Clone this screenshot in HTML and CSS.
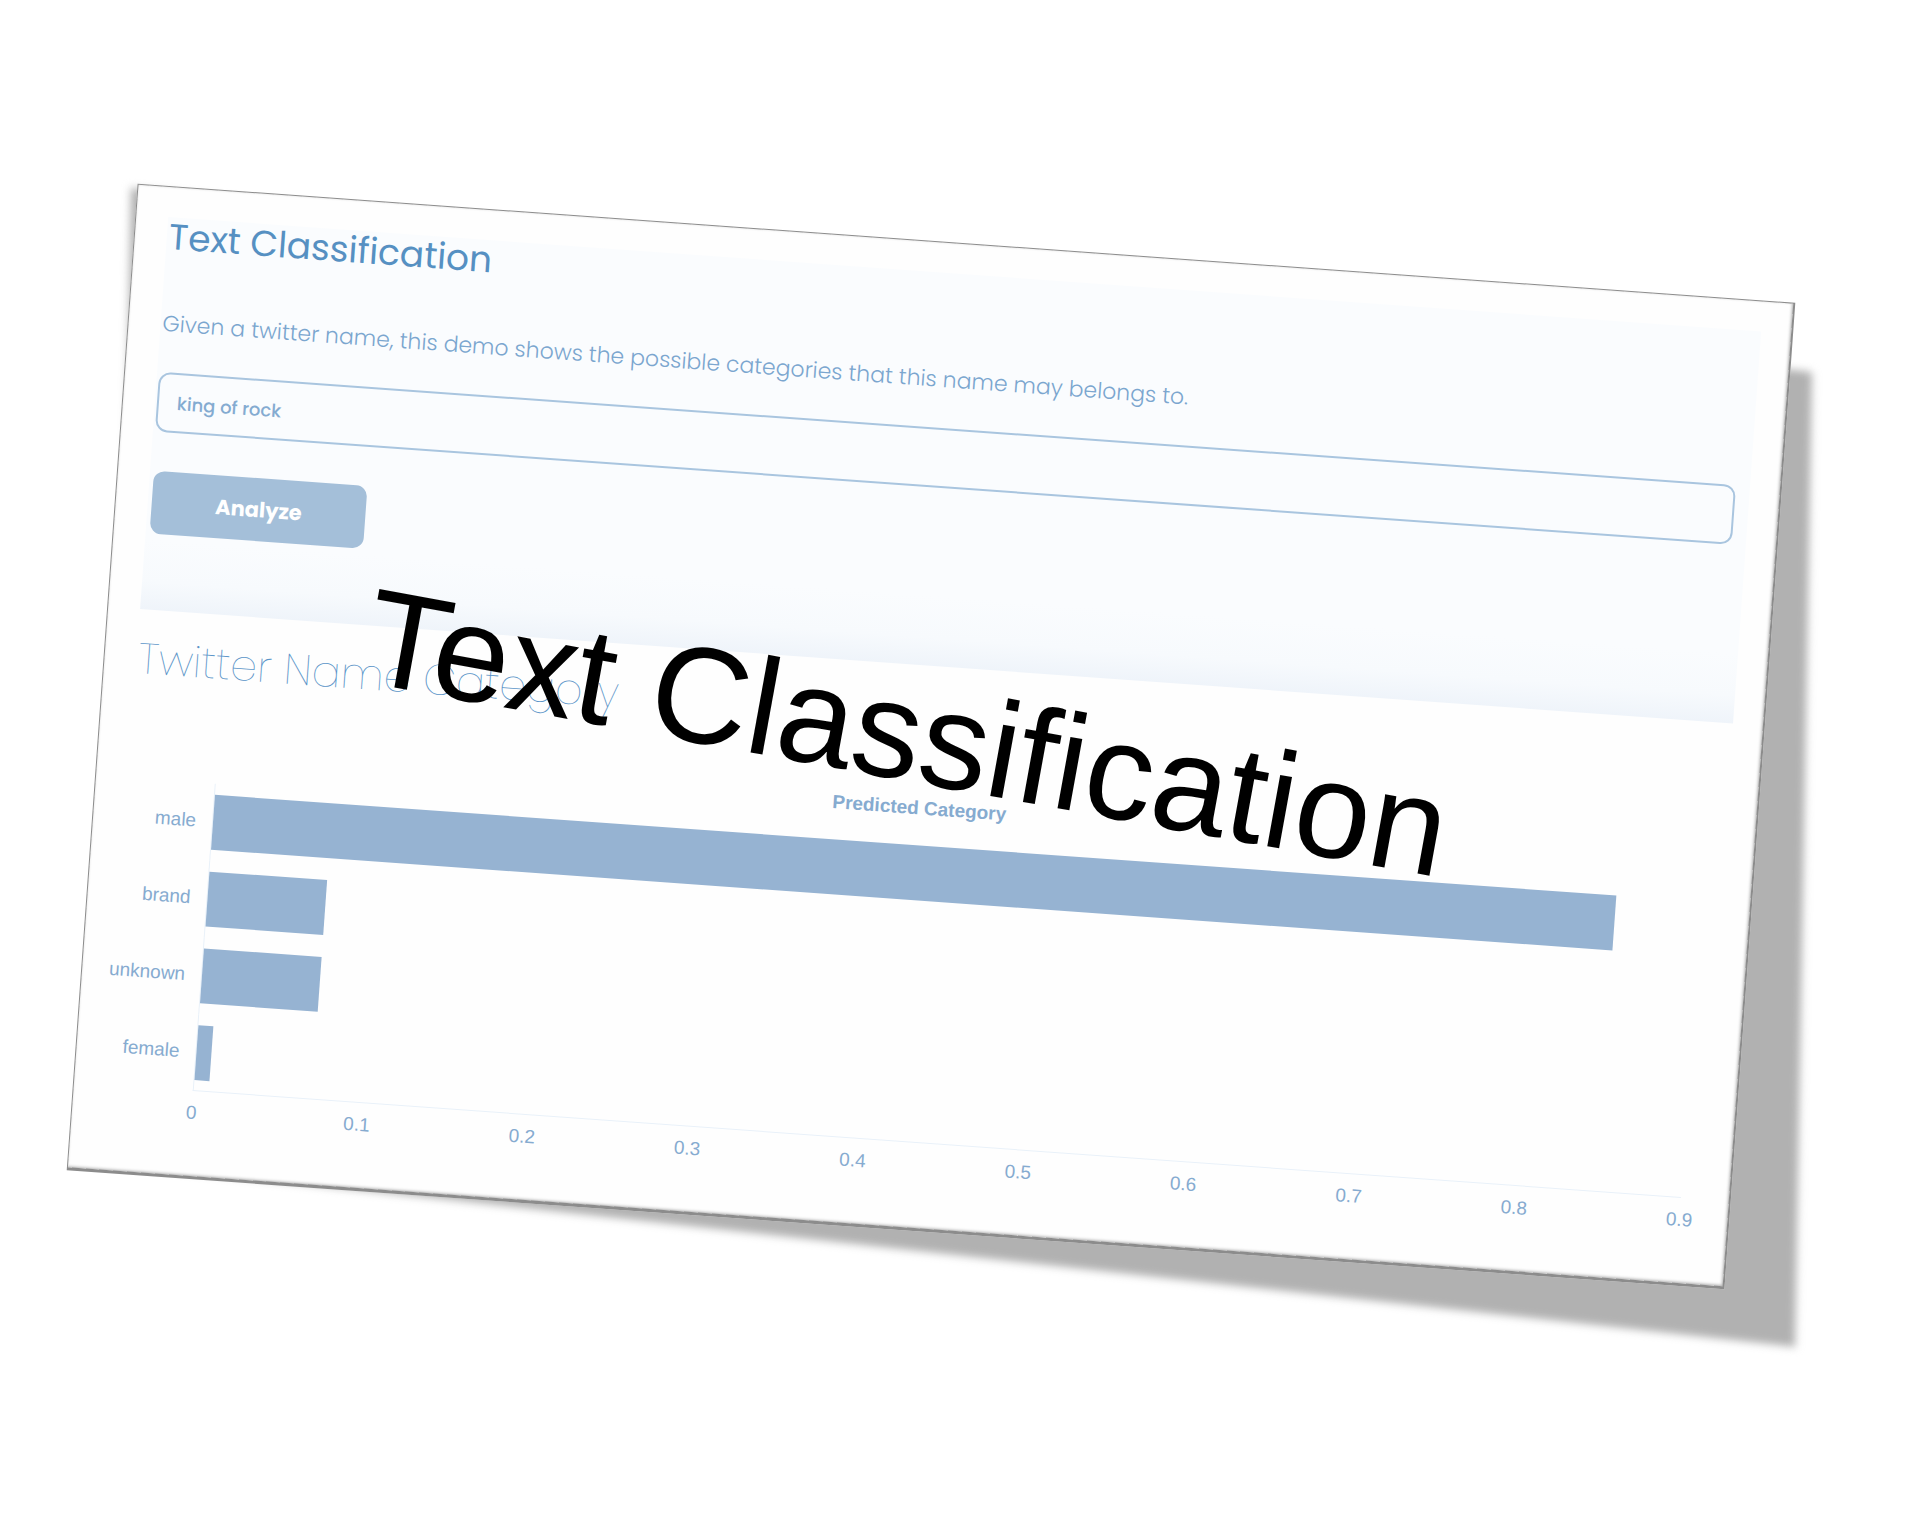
FILE: index.html
```html
<!DOCTYPE html>
<html lang="en">
<head>
<meta charset="utf-8">
<title>Text Classification</title>
<link rel="stylesheet" href="styles.css">
</head>
<body>
<main class="stage">
  <article class="card">
    <section class="panel">
      <h2 class="panel-title">Text Classification</h2>
      <label class="panel-text" for="name">Given a twitter name, this demo shows the possible categories that this name may belongs to.</label>
      <input class="field" id="name" type="text" value="king of rock">
      <button class="button" type="button">Analyze</button>
    </section>
    <h3 class="result-title">Twitter Name Category</h3>
    <section class="chart">
      <h4 class="chart-title">Predicted Category</h4>
      <div class="plot">
        <div class="label">male</div><div class="track"><div class="bar" style="width:94.2%"></div></div>
        <div class="label">brand</div><div class="track"><div class="bar" style="width:7.9%"></div></div>
        <div class="label">unknown</div><div class="track"><div class="bar" style="width:7.9%"></div></div>
        <div class="label">female</div><div class="track"><div class="bar" style="width:1%"></div></div>
      </div>
      <div class="ticks">
        <span>0</span><span>0.1</span><span>0.2</span><span>0.3</span><span>0.4</span><span>0.5</span><span>0.6</span><span>0.7</span><span>0.8</span><span>0.9</span>
      </div>
    </section>
  </article>
  <div class="overlay"><h1 class="banner">Text Classification</h1></div>
</main>
</body>
</html>
```
FILE: styles.css
```css
* { box-sizing: border-box; }

body {
  margin: 0;
  background: #fff;
  font-family: Poppins, Inter, "Liberation Sans", sans-serif;
}

h1, h2, h3, h4 { margin: 0; font-weight: 400; }

.stage {
  position: relative;
  margin: 242px 165px 242px 100px;
}

/* soft sheet shadow lying behind the card */
.stage::before {
  content: "";
  position: absolute;
  inset: 38px -43px -24px 21px;
  background: #b1b1b1;
  transform: rotate(1deg) skewY(5.24deg);
  filter: blur(4px);
}

.card {
  position: relative;
  padding: 30px 30px 51px 32px;
  border: 1px solid #8c8c8c;
  border-width: 1px 2px 3px 1px;
  background: #fefefe;
  box-shadow: inset -1px -1px 3px rgba(0, 0, 0, .3);
  transform: rotate(4.11deg);
}

.panel {
  display: flex;
  flex-direction: column;
  align-items: flex-start;
  padding: 0 14px 76px 2px;
  background: linear-gradient(to top, #eff4fa 0, #f7fafd 28px, #fafcfe 70px);
}

.panel-title {
  margin-bottom: 52px;
  font-size: 36px;
  line-height: 40px;
  color: #5690c2;
}

.panel-text {
  margin-bottom: 33px;
  font-size: 22px;
  font-weight: 300;
  line-height: 30px;
  color: #7ba6cf;
}

.field {
  width: 100%;
  height: 60px;
  margin-bottom: 39px;
  padding: 0 18px;
  border: 2px solid #a9c5df;
  border-radius: 12px;
  background: transparent;
  font: 500 18px/24px Poppins, Inter, sans-serif;
  color: #84abd1;
}

.button {
  width: 214px;
  height: 63px;
  margin-left: 2px;
  border: 0;
  border-radius: 11px;
  background: #a4bfd9;
  font: 700 21px/24px Poppins, Inter, sans-serif;
  color: #fff;
}

.result-title {
  margin: 19px 0 52px 2px;
  font-size: 43px;
  font-weight: 200;
  line-height: 60px;
  color: #5a94c8;
}

.chart {
  font-family: "Liberation Sans", Arial, sans-serif;
  font-size: 19px;
  line-height: 24px;
  color: #86abd0;
}

.chart-title {
  margin-bottom: 14px;
  padding-right: 14px;
  font-size: 19px;
  font-weight: 700;
  text-align: center;
}

.plot {
  display: grid;
  grid-template-columns: 91px 1fr;
  grid-auto-rows: 77px;
  margin: 0 18px 0 -4px;
}

.label {
  display: flex;
  align-items: center;
  justify-content: flex-end;
  margin-right: 16px;
  padding-bottom: 2px;
}

.track {
  display: flex;
  align-items: center;
  border-left: 1px solid #e9f1f9;
}

.track:last-child { border-bottom: 1px solid #e9f1f9; }

.bar {
  height: 55px;
  background: #96b3d2;
}

.ticks {
  display: flex;
  justify-content: space-between;
  margin-top: 10px;
  padding-left: 69px;
}

.ticks span {
  width: 36px;
  text-align: center;
}

/* large caption laid across the card */
.overlay {
  position: absolute;
  inset: 0;
  display: grid;
  place-items: center;
  padding: 0 48px 8px 0;
  pointer-events: none;
}

.banner {
  font-family: "Liberation Sans", Arial, sans-serif;
  font-size: 137px;
  line-height: 160px;
  white-space: nowrap;
  color: #000;
  transform: rotate(10.3deg);
}
```
